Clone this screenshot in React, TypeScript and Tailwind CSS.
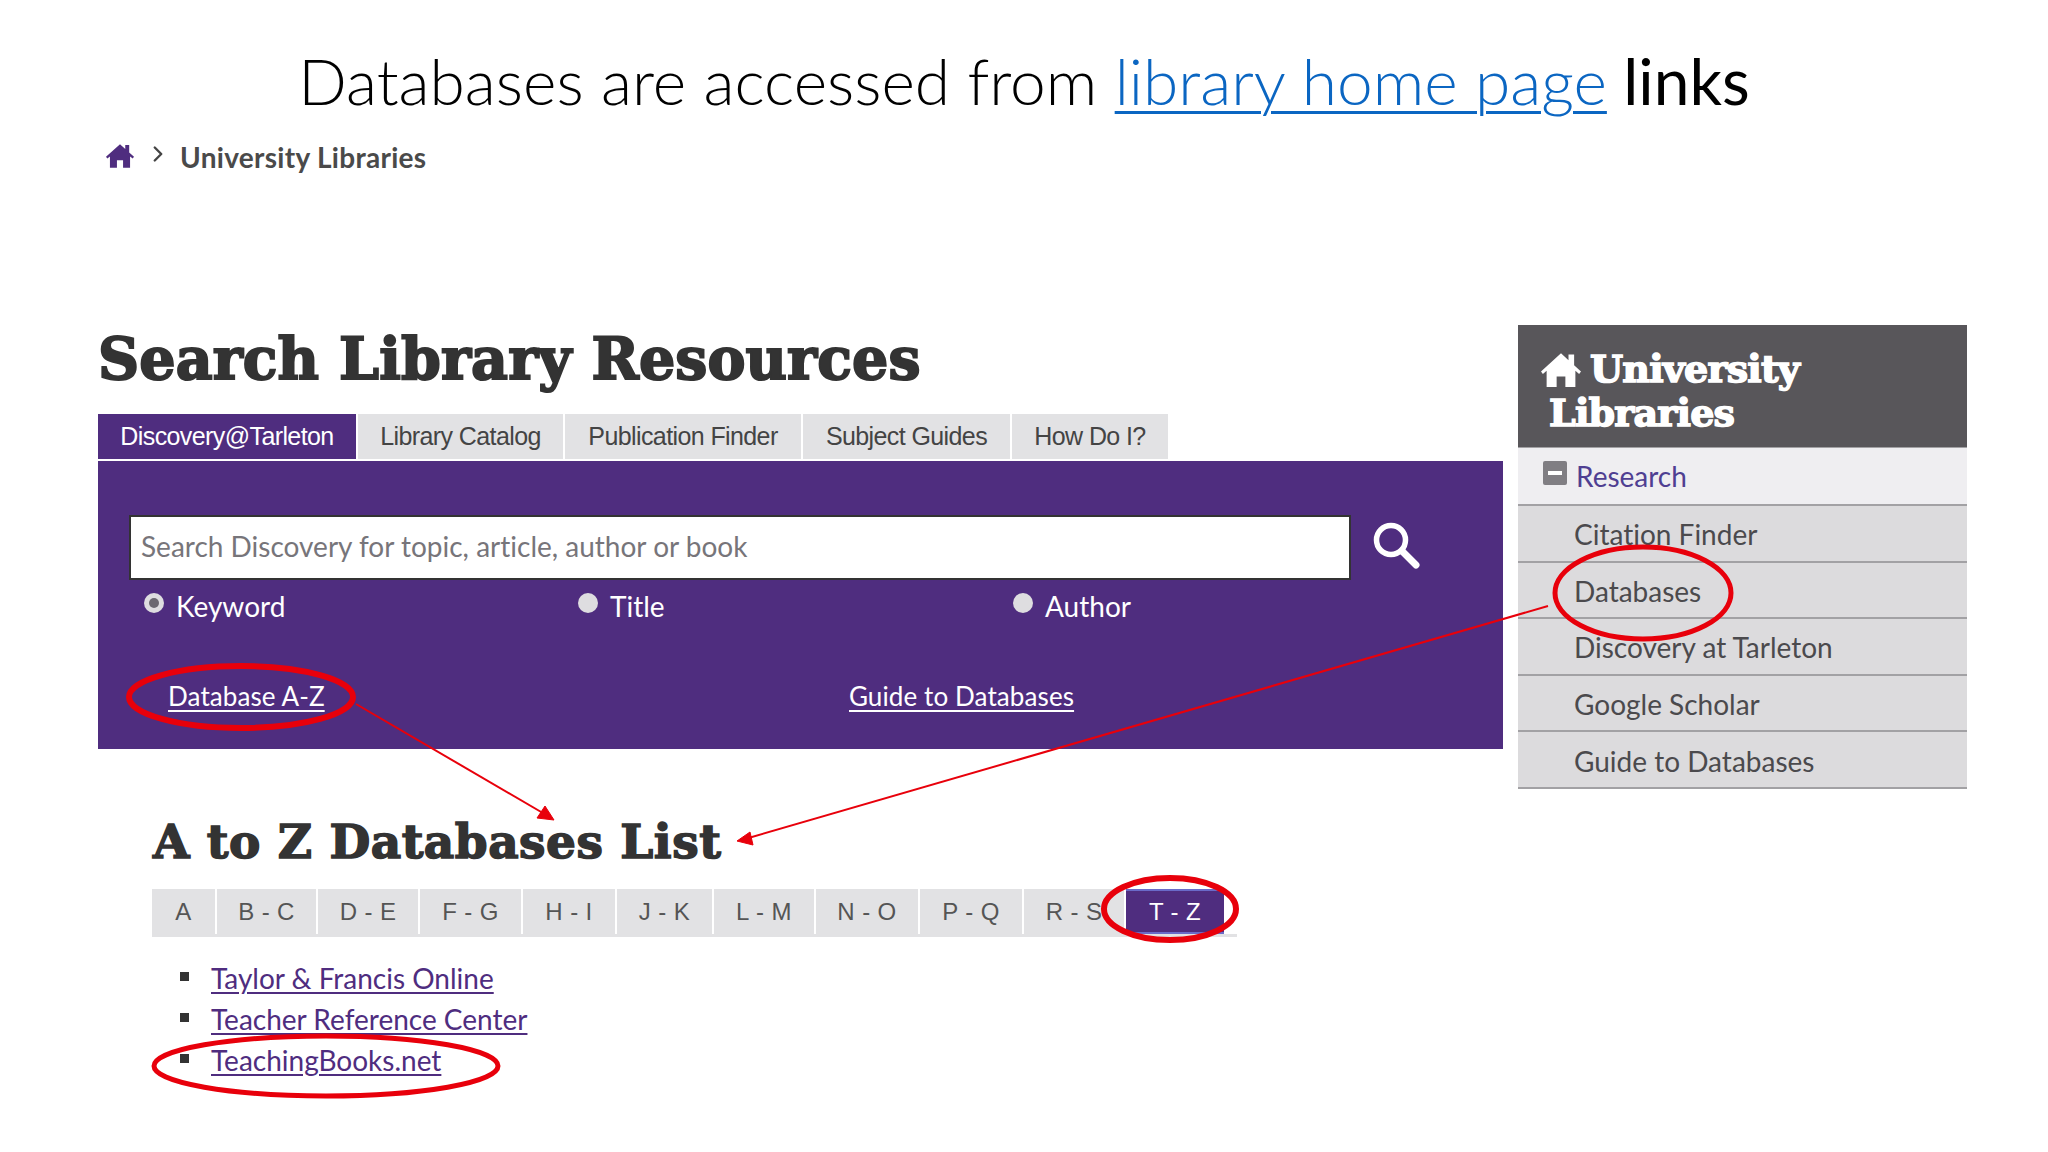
import React from 'react';
import { ChevronRight } from 'lucide-react';

const TABS = ['Library Catalog', 'Publication Finder', 'Subject Guides', 'How Do I?'];
const TAB_WIDTHS = ['w-[205px]', 'w-[236px]', 'w-[207px]', 'w-[156px]'];

const LETTERS = [
  { label: 'A', w: 'w-[63px]' },
  { label: 'B - C', w: 'w-[99px]' },
  { label: 'D - E', w: 'w-[100px]' },
  { label: 'F - G', w: 'w-[101px]' },
  { label: 'H - I', w: 'w-[92px]' },
  { label: 'J - K', w: 'w-[95px]' },
  { label: 'L - M', w: 'w-[100px]' },
  { label: 'N - O', w: 'w-[102px]' },
  { label: 'P - Q', w: 'w-[102px]' },
  { label: 'R - S', w: 'w-[100px]' },
];

const SIDE_LINKS = ['Citation Finder', 'Databases', 'Discovery at Tarleton', 'Google Scholar', 'Guide to Databases'];
const DB_LINKS = ['Taylor & Francis Online', 'Teacher Reference Center', 'TeachingBooks.net'];

const HomeIcon = ({ className }: { className: string }) => (
  <svg viewBox="0 0 32 28" className={className} fill="currentColor">
    <path d="M16 1 L22 6.5 V2 H26.5 V10.5 L32 15.5 L30.5 17.5 L27.5 15 V28 H19.5 V19.5 H12.5 V28 H4.5 V15 L1.5 17.5 L0 15.5 Z" />
  </svg>
);

const Radio = ({ label, checked, width }: { label: string; checked?: boolean; width: string }) => (
  <div className={`flex items-center ${width}`}>
    <span className="flex h-[20px] w-[20px] -translate-y-[3px] items-center justify-center rounded-full bg-[#dedde0]">
      {checked && <span className="h-[10px] w-[10px] rounded-full bg-[#6b6870]" />}
    </span>
    <span className="ml-[12px] text-[28px] leading-none text-white">{label}</span>
  </div>
);

export default function App() {
  return (
    <div className="relative h-[1152px] w-[2048px] overflow-hidden bg-white font-['Lato',sans-serif] [font-variant-ligatures:none]">
      {/* slide title */}
      <h1 className="flex h-[136px] items-start justify-center pt-[41px] text-[64px] font-light leading-[80px] text-black">
        <span>Databases are accessed from&nbsp;</span>
        <span className="text-[#0b66c2] underline decoration-[3px] underline-offset-[6px]">library home page</span>
        <span className="font-normal">&nbsp;links</span>
      </h1>

      {/* breadcrumb */}
      <div className="flex h-[42px] items-center pl-[106px]">
        <HomeIcon className="h-[25px] w-[28px] -translate-y-[2px] text-[#4f2d7f]" />
        <ChevronRight className="ml-[11px] h-[26px] w-[26px] -translate-y-[3px] text-[#444]" strokeWidth={2.2} />
        <span className="ml-[9px] text-[28px] font-bold tracking-[0.3px] text-[#4a4a4a]">University Libraries</span>
      </div>

      <div className="mt-[147px] flex pl-[98px]">
        {/* search column */}
        <div className="w-[1405px]">
          <h2 className="h-[89px] whitespace-nowrap font-['DejaVu_Serif',serif] text-[57px] font-bold leading-[68px] tracking-[0.1px] text-[#333] [-webkit-text-stroke:2px_#333]">
            Search Library Resources
          </h2>
          <div className="flex gap-[2px] font-['Liberation_Sans',sans-serif] text-[25px] tracking-[-0.6px]">
            <div className="flex h-[45px] w-[258px] items-center justify-center bg-[#4f2d7f] text-white">Discovery@Tarleton</div>
            {TABS.map((tab, i) => (
              <div key={tab} className={`flex h-[45px] items-center justify-center bg-[#e2e2e4] text-[#444] ${TAB_WIDTHS[i]}`}>
                {tab}
              </div>
            ))}
          </div>
          <div className="mt-[2px] h-[288px] bg-[#4f2d7f] pl-[31px] pt-[54px]">
            <div className="flex items-center">
              <div className="flex h-[65px] w-[1222px] items-center border-2 border-[#333] bg-white pb-[3px] pl-[10px] text-[28px] text-[#77757a]">
                Search Discovery for topic, article, author or book
              </div>
              <svg viewBox="0 0 48 48" className="ml-[21px] h-[48px] w-[48px] -translate-y-[3px]" fill="none" stroke="white">
                <circle cx="19" cy="19" r="14.5" strokeWidth="5.5" />
                <path d="M30 30 L44 44" strokeWidth="7" strokeLinecap="round" />
              </svg>
            </div>
            <div className="ml-[15px] mt-[9px] flex h-[34px]">
              <Radio label="Keyword" checked width="w-[434px]" />
              <Radio label="Title" width="w-[435px]" />
              <Radio label="Author" width="w-[200px]" />
            </div>
            <div className="ml-[39px] mt-[60px] flex text-[26px] leading-none tracking-[0.1px] text-white underline underline-offset-[4px]">
              <span className="w-[681px]">Database A-Z</span>
              <span>Guide to Databases</span>
            </div>
          </div>

          {/* a to z list */}
          <div className="pl-[54px]">
            <h3 className="ml-[1px] mt-[65px] h-[75px] whitespace-nowrap font-['DejaVu_Serif',serif] text-[47px] font-bold leading-[56px] tracking-[0.5px] text-[#333] [-webkit-text-stroke:1.5px_#333]">
              A to Z Databases List
            </h3>
            <div className="flex w-[1085px] gap-[2px] border-b-[3px] border-[#e2e2e4] font-['Liberation_Sans',sans-serif] text-[24px] text-[#555]">
              {LETTERS.map((l) => (
                <div key={l.label} className={`flex h-[45px] items-center justify-center bg-[#e2e2e4] tracking-[0.4px] ${l.w}`}>
                  {l.label}
                </div>
              ))}
              <div className="flex h-[45px] w-[98px] items-center justify-center border-y-2 border-[#6a6ac8] bg-[#4f2d7f] tracking-[0.4px] text-white">T - Z</div>
            </div>
            <ul className="mt-[26px] flex flex-col gap-[10px] pl-[28px] text-[28px] leading-[31px] text-[#4f2d7f]">
              {DB_LINKS.map((d) => (
                <li key={d} className="flex items-center">
                  <span className="h-[9px] w-[9px] -translate-y-[2px] bg-[#333]" />
                  <span className="ml-[22px] underline underline-offset-[3px]">{d}</span>
                </li>
              ))}
            </ul>
          </div>
        </div>

        {/* sidebar */}
        <aside className="ml-[15px] h-fit w-[449px]">
          <div className="h-[122px] bg-[#58565a] pl-[22px] pt-[22px] font-['DejaVu_Serif',serif] text-[38px] font-bold leading-[44px] text-white [-webkit-text-stroke:1.5px_#fff]">
            <div className="flex items-center">
              <HomeIcon className="h-[35px] w-[42px]" />
              <span className="ml-[8px] tracking-[-0.8px]">University</span>
            </div>
            <div className="ml-[9px] tracking-[-0.8px]">Libraries</div>
          </div>
          <div className="flex h-[59px] items-center border-b-2 border-t border-[#a2a1a4] bg-[#efeef1] pl-[25px]">
            <span className="flex h-[24px] w-[24px] -translate-y-[3px] items-center justify-center rounded-[2px] bg-[#807e83]">
              <span className="h-[4px] w-[14px] bg-white" />
            </span>
            <span className="ml-[9px] text-[28px] text-[#4f3f92]">Research</span>
          </div>
          {SIDE_LINKS.map((s) => (
            <div key={s} className="flex h-[56.6px] items-center border-b-2 border-[#a2a1a4] bg-[#dcdbdd] pl-[56px] pt-[2px] text-[28px] text-[#4b4a4d]">
              {s}
            </div>
          ))}
        </aside>
      </div>

      {/* red annotations drawn on top of the slide */}
      <svg className="pointer-events-none absolute inset-0 h-[1152px] w-[2048px]" viewBox="0 0 2048 1152" fill="none" stroke="#e8000b">
        <ellipse cx="241" cy="697" rx="112" ry="31" strokeWidth="6" />
        <ellipse cx="1643" cy="593" rx="88" ry="46" strokeWidth="5" />
        <ellipse cx="1170" cy="909" rx="66" ry="31" strokeWidth="6" />
        <ellipse cx="326" cy="1066" rx="172" ry="30" strokeWidth="5" />
        <path d="M356 704 L548 816" strokeWidth="2" />
        <path d="M1548 606 L745 839" strokeWidth="2" />
        <path d="M554 820 L537 818 L545 806 Z" fill="#e8000b" strokeWidth="1" />
        <path d="M737 841 L750 832 L753 845 Z" fill="#e8000b" strokeWidth="1" />
      </svg>
    </div>
  );
}
